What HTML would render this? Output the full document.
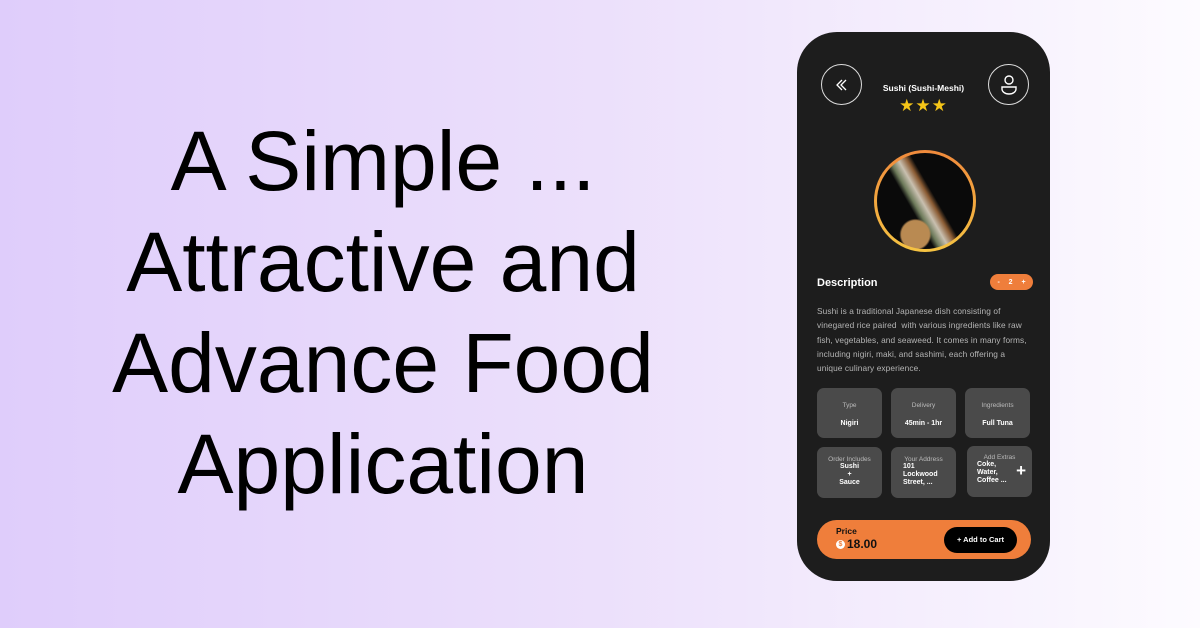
<!DOCTYPE html>
<html><head><meta charset="utf-8"><style>
*{margin:0;padding:0;box-sizing:border-box}
body{width:1200px;height:628px;overflow:hidden;position:relative;font-family:"Liberation Sans",sans-serif;background:linear-gradient(90deg,#dfcdfb 0%,#ece0fb 50%,#fdfbff 100%)}
.title{position:absolute;left:83px;width:600px;top:111px;text-align:center;font-size:84px;line-height:101px;color:#000}
.phone{position:absolute;left:797px;top:32px;width:253px;height:549px;background:#1d1d1d;border-radius:40px;color:#fff;overflow:hidden}
.circ{position:absolute;width:41px;height:41px;border:1.3px solid #ddd;border-radius:50%}
.card{position:absolute;width:65px;height:50px;background:#4a4a4a;border-radius:7px;text-align:center}
.card .l{font-size:6.5px;color:#bbb;margin-top:14px}
.card .v{font-size:7px;font-weight:bold;margin-top:11px}
</style></head><body>
<div class="title">A Simple ...<br>Attractive and<br>Advance Food<br>Application</div>
<div class="phone">
 <div class="circ" style="left:24px;top:32px"><svg width="41" height="41" viewBox="0 0 41 41"><path d="M20 15l-5 5 5 5M24 15l-5 5 5 5" fill="none" stroke="#fff" stroke-width="1.3"/></svg></div>
 <div class="circ" style="left:191px;top:32px"><svg width="41" height="41" viewBox="0 0 41 41"><circle cx="20" cy="15" r="4" fill="none" stroke="#fff" stroke-width="1.4"/><path d="M13 22h14v2a7 5 0 0 1-14 0z" fill="none" stroke="#fff" stroke-width="1.4"/></svg></div>
 <div style="position:absolute;left:0;width:253px;top:51px;text-align:center;font-size:8.5px;font-weight:bold">Sushi (Sushi-Meshi)</div>
 <div style="position:absolute;left:0;width:253px;top:64px;text-align:center;font-size:17px;line-height:20px;color:#f5c518;letter-spacing:1px">★★★</div>
 <div style="position:absolute;left:77px;top:118px;width:102px;height:102px;border-radius:50%;background:linear-gradient(180deg,#f08a3c,#f5c342);padding:3px">
  <div style="width:100%;height:100%;border-radius:50%;background:radial-gradient(circle at 40% 85%,#b98a52 0 14%,transparent 16%),linear-gradient(60deg,transparent 38%,#6d7a5a 42%,#c9c0b0 48%,#8a5b33 54%,transparent 58%),#0a0a0a"></div>
 </div>
 <div style="position:absolute;left:20px;top:245px;font-size:11px;font-weight:bold">Description</div>
 <div style="position:absolute;left:193px;top:242px;width:43px;height:16px;background:#ef7e3b;border-radius:8px;font-size:7px;font-weight:bold;display:flex;justify-content:space-around;align-items:center;padding:0 3px"><span>-</span><span>2</span><span>+</span></div>
 <div style="position:absolute;left:20px;top:272px;width:218px;font-size:8.3px;line-height:14.3px;color:#b5b5b5;letter-spacing:0.1px">Sushi is a traditional Japanese dish consisting of<br>vinegared rice paired&nbsp; with various ingredients like raw<br>fish, vegetables, and seaweed. It comes in many forms,<br>including nigiri, maki, and sashimi, each offering a<br>unique culinary experience.</div>
 <div class="card" style="left:20px;top:356px"><div class="l">Type</div><div class="v">Nigiri</div></div>
 <div class="card" style="left:94px;top:356px"><div class="l">Delivery</div><div class="v">45min - 1hr</div></div>
 <div class="card" style="left:168px;top:356px"><div class="l">Ingredients</div><div class="v">Full Tuna</div></div>
 <div class="card" style="left:20px;top:415px;height:51px"><div class="l" style="margin-top:9px">Order Includes</div><div class="v" style="margin-top:0;line-height:8px">Sushi<br>+<br>Sauce</div></div>
 <div class="card" style="left:94px;top:415px;height:51px"><div class="l" style="margin-top:9px">Your Address</div><div class="v" style="margin-top:0;line-height:8px;text-align:left;padding-left:12px">101<br>Lockwood<br>Street, ...</div></div>
 <div class="card" style="left:170px;top:414px;height:51px"><div class="l" style="margin-top:8px">Add Extras</div><div class="v" style="margin-top:0;line-height:8px;text-align:left;padding-left:10px">Coke,<br>Water,<br>Coffee ...</div><div style="position:absolute;right:6px;top:15px;font-size:17px;font-weight:bold">+</div></div>
 <div style="position:absolute;left:20px;top:488px;width:214px;height:39px;background:#ef7e3b;border-radius:20px">
  <div style="position:absolute;left:19px;top:6px;font-size:8.5px;font-weight:bold;color:#111">Price</div>
  <div style="position:absolute;left:19px;top:17px;font-size:12px;font-weight:bold;color:#111;display:flex;align-items:center"><span style="display:inline-block;width:9px;height:9px;border-radius:50%;background:#fff;color:#ef7e3b;font-size:7px;text-align:center;line-height:9px;margin-right:2px">$</span>18.00</div>
  <div style="position:absolute;left:127px;top:7px;width:73px;height:26px;background:#000;border-radius:13px;color:#fff;font-size:7.5px;font-weight:bold;text-align:center;line-height:26px">+ Add to Cart</div>
 </div>
</div>
</body></html>
